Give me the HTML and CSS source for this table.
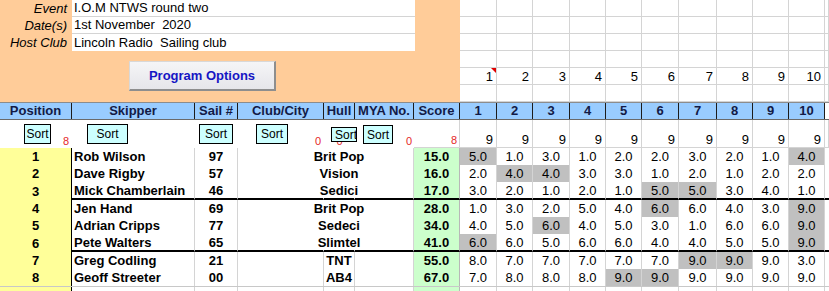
FILE: index.html
```html
<!DOCTYPE html>
<html>
<head>
<meta charset="utf-8">
<link rel="stylesheet" href="styles.css">
</head>
<body>
<div class="sheet">
  <div class="top">
    <div class="info">
      <div class="info-row"><span class="info-lbl">Event</span><span class="info-val">I.O.M NTWS round two</span></div>
      <div class="info-row"><span class="info-lbl">Date(s)</span><span class="info-val">1st November&nbsp; 2020</span></div>
      <div class="info-row"><span class="info-lbl">Host Club</span><span class="info-val last">Lincoln Radio&nbsp; Sailing club</span></div>
      <div class="btn-row"><button class="prog-btn">Program Options</button></div>
    </div>
    <div class="topgrid">
      <div class="tg"></div><div class="tg"></div><div class="tg"></div><div class="tg"></div><div class="tg"></div><div class="tg"></div><div class="tg"></div><div class="tg"></div><div class="tg"></div><div class="tg"></div><div class="tg"></div>
      <div class="tg"></div><div class="tg"></div><div class="tg"></div><div class="tg"></div><div class="tg"></div><div class="tg"></div><div class="tg"></div><div class="tg"></div><div class="tg"></div><div class="tg"></div><div class="tg"></div>
      <div class="tg"></div><div class="tg"></div><div class="tg"></div><div class="tg"></div><div class="tg"></div><div class="tg"></div><div class="tg"></div><div class="tg"></div><div class="tg"></div><div class="tg"></div><div class="tg"></div>
      <div class="tg"></div><div class="tg"></div><div class="tg"></div><div class="tg"></div><div class="tg"></div><div class="tg"></div><div class="tg"></div><div class="tg"></div><div class="tg"></div><div class="tg"></div><div class="tg"></div>
      <div class="tg num"><span class="comment"></span>1</div><div class="tg num">2</div><div class="tg num">3</div><div class="tg num">4</div><div class="tg num">5</div><div class="tg num">6</div><div class="tg num">7</div><div class="tg num">8</div><div class="tg num">9</div><div class="tg num">10</div><div class="tg"></div>
      <div class="tg"></div><div class="tg"></div><div class="tg"></div><div class="tg"></div><div class="tg"></div><div class="tg"></div><div class="tg"></div><div class="tg"></div><div class="tg"></div><div class="tg"></div><div class="tg"></div>
    </div>
  </div>

  <div class="row head">
    <div class="h">Position</div><div class="h">Skipper</div><div class="h">Sail #</div><div class="h">Club/City</div><div class="h">Hull</div><div class="h">MYA No.</div><div class="h">Score</div>
    <div class="h">1</div><div class="h">2</div><div class="h">3</div><div class="h">4</div><div class="h">5</div><div class="h">6</div><div class="h">7</div><div class="h">8</div><div class="h">9</div><div class="h">10</div><div class="h edge"></div>
  </div>

  <div class="row sortrow">
    <div class="s"><button class="sort sort-pos">Sort</button><span class="cnt">8</span></div>
    <div class="s"><button class="sort sort-skip">Sort</button></div>
    <div class="s"><button class="sort sort-sail">Sort</button></div>
    <div class="s"><button class="sort sort-club">Sort</button><span class="cnt">0</span></div>
    <div class="s s-center"><span class="cnt">0</span><button class="sort sort-hull">Sort</button></div>
    <div class="s"><button class="sort sort-mya">Sort</button><span class="cnt cnt-tight">0</span></div>
    <div class="s s-line"><span class="cnt cnt-tight">8</span></div>
    <div class="s s-line r">9</div><div class="s s-line r">9</div><div class="s s-line r">9</div><div class="s s-line r">9</div><div class="s s-line r">9</div><div class="s s-line r">9</div><div class="s s-line r">9</div><div class="s s-line r">9</div><div class="s s-line r">9</div><div class="s s-line r">9</div><div class="s s-line"></div>
  </div>

  <div class="row data ov">
    <div class="pos">1</div><div class="skip">Rob Wilson</div><div class="sail">97</div><div class="club"></div><div class="hull">Brit Pop</div><div class="mya"></div><div class="score">15.0</div>
    <div class="rc x">5.0</div><div class="rc">1.0</div><div class="rc">3.0</div><div class="rc">1.0</div><div class="rc">2.0</div><div class="rc">2.0</div><div class="rc">3.0</div><div class="rc">2.0</div><div class="rc">1.0</div><div class="rc x">4.0</div><div class="rc edge"></div>
  </div>
  <div class="row data ov">
    <div class="pos">2</div><div class="skip">Dave Rigby</div><div class="sail">57</div><div class="club"></div><div class="hull">Vision</div><div class="mya"></div><div class="score">16.0</div>
    <div class="rc">2.0</div><div class="rc x">4.0</div><div class="rc x">4.0</div><div class="rc">3.0</div><div class="rc">3.0</div><div class="rc">1.0</div><div class="rc">2.0</div><div class="rc">1.0</div><div class="rc">2.0</div><div class="rc">2.0</div><div class="rc edge"></div>
  </div>
  <div class="row data ov sep">
    <div class="pos">3</div><div class="skip">Mick Chamberlain</div><div class="sail">46</div><div class="club"></div><div class="hull">Sedici</div><div class="mya"></div><div class="score">17.0</div>
    <div class="rc">3.0</div><div class="rc">2.0</div><div class="rc">1.0</div><div class="rc">2.0</div><div class="rc">1.0</div><div class="rc x">5.0</div><div class="rc x">5.0</div><div class="rc">3.0</div><div class="rc">4.0</div><div class="rc">1.0</div><div class="rc edge"></div>
  </div>
  <div class="row data ov">
    <div class="pos">4</div><div class="skip">Jen Hand</div><div class="sail">69</div><div class="club"></div><div class="hull">Brit Pop</div><div class="mya"></div><div class="score">28.0</div>
    <div class="rc">1.0</div><div class="rc">3.0</div><div class="rc">2.0</div><div class="rc">5.0</div><div class="rc">4.0</div><div class="rc x">6.0</div><div class="rc">6.0</div><div class="rc">4.0</div><div class="rc">3.0</div><div class="rc x">9.0</div><div class="rc edge"></div>
  </div>
  <div class="row data ov">
    <div class="pos">5</div><div class="skip">Adrian Cripps</div><div class="sail">77</div><div class="club"></div><div class="hull">Sedeci</div><div class="mya"></div><div class="score">34.0</div>
    <div class="rc">4.0</div><div class="rc">5.0</div><div class="rc x">6.0</div><div class="rc">4.0</div><div class="rc">5.0</div><div class="rc">3.0</div><div class="rc">1.0</div><div class="rc">6.0</div><div class="rc">6.0</div><div class="rc x">9.0</div><div class="rc edge"></div>
  </div>
  <div class="row data ov sep">
    <div class="pos">6</div><div class="skip">Pete Walters</div><div class="sail">65</div><div class="club"></div><div class="hull">Slimtel</div><div class="mya"></div><div class="score">41.0</div>
    <div class="rc x">6.0</div><div class="rc">6.0</div><div class="rc">5.0</div><div class="rc">6.0</div><div class="rc">6.0</div><div class="rc">4.0</div><div class="rc">4.0</div><div class="rc">5.0</div><div class="rc">5.0</div><div class="rc x">9.0</div><div class="rc edge"></div>
  </div>
  <div class="row data">
    <div class="pos">7</div><div class="skip">Greg Codling</div><div class="sail">21</div><div class="club"></div><div class="hull">TNT</div><div class="mya"></div><div class="score">55.0</div>
    <div class="rc">8.0</div><div class="rc">7.0</div><div class="rc">7.0</div><div class="rc">7.0</div><div class="rc">7.0</div><div class="rc">7.0</div><div class="rc x">9.0</div><div class="rc x">9.0</div><div class="rc">9.0</div><div class="rc">3.0</div><div class="rc edge"></div>
  </div>
  <div class="row data">
    <div class="pos">8</div><div class="skip">Geoff Streeter</div><div class="sail">00</div><div class="club"></div><div class="hull">AB4</div><div class="mya"></div><div class="score">67.0</div>
    <div class="rc">7.0</div><div class="rc">8.0</div><div class="rc">8.0</div><div class="rc">8.0</div><div class="rc x">9.0</div><div class="rc x">9.0</div><div class="rc">9.0</div><div class="rc">9.0</div><div class="rc">9.0</div><div class="rc">9.0</div><div class="rc edge"></div>
  </div>
  <div class="row blank">
    <div class="pos"></div><div class="skip"></div><div class="sail"></div><div class="club"></div><div class="hull"></div><div class="mya"></div><div class="score"></div>
    <div class="rc"></div><div class="rc"></div><div class="rc"></div><div class="rc"></div><div class="rc"></div><div class="rc"></div><div class="rc"></div><div class="rc"></div><div class="rc"></div><div class="rc"></div><div class="rc edge"></div>
  </div>
</div>
</body>
</html>
```
FILE: styles.css
```css
* { box-sizing: border-box; }

body {
  margin: 0;
  background: #fff;
  color: #000;
  font-family: "Liberation Sans", Arial, sans-serif;
  font-size: 13px;
}

.sheet {
  width: 829px;
  height: 291px;
  overflow: hidden;
}

/* ---------- top area ---------- */
.top {
  display: flex;
  height: 102px;
}

.info {
  flex: none;
  width: 460px;
  background: #ffcc99;
}

.info-row {
  display: flex;
  height: 17px;
}

.info-lbl {
  width: 72px;
  padding-right: 5px;
  text-align: right;
  font-style: italic;
  line-height: 17px;
}

.info-val {
  width: 343px;
  padding-left: 2px;
  background: #fff;
  border-bottom: 1px solid #d4d4d4;
  line-height: 16px;
}

.info-val.last {
  border-bottom: 0;
  line-height: 17px;
}

.btn-row {
  padding: 10px 0 0 129px;
}

.prog-btn {
  display: block;
  width: 147px;
  height: 30px;
  padding: 0;
  font-family: "Liberation Sans", Arial, sans-serif;
  font-size: 13px;
  font-weight: bold;
  color: #1616c4;
  background: linear-gradient(#f5f5f7, #e6e6ea);
  border: 1px solid #d8d8d8;
  border-right: 2px solid #8e8e8e;
  border-bottom: 2px solid #8e8e8e;
}

.topgrid {
  flex: 1;
  display: grid;
  grid-template-columns: 37px 36px 37px 36px 36px 37px 38px 36px 36px 36px 1fr;
  grid-template-rows: repeat(6, 17px);
}

.tg {
  border-right: 1px solid #d4d4d4;
  border-bottom: 1px solid #d4d4d4;
}

.tg.num {
  position: relative;
  text-align: right;
  padding-right: 3px;
  line-height: 17px;
}

.comment {
  position: absolute;
  top: 0;
  right: 0;
  width: 0;
  height: 0;
  border-top: 5px solid #e00000;
  border-left: 5px solid transparent;
}

/* ---------- table rows ---------- */
.row {
  display: grid;
  grid-template-columns: 72px 123px 43px 86px 31px 59px 46px 37px 36px 37px 36px 36px 37px 38px 36px 36px 36px 1fr;
}

.head {
  height: 18px;
  background: #99ccff;
  border-top: 1px solid #8c8c8c;
  border-bottom: 1px solid #6a6a6a;
}

.h {
  border-right: 1px solid #1c1c1c;
  text-align: center;
  font-weight: bold;
  line-height: 16px;
  color: #121a46;
}

.h.edge {
  background: #fff;
  border-right: 0;
}

.sortrow {
  height: 28px;
}

.s {
  position: relative;
  display: flex;
  justify-content: flex-end;
  align-items: flex-end;
  line-height: 15px;
}

.s.s-line {
  border-right: 1px solid #d4d4d4;
  border-bottom: 1px solid #d4d4d4;
}

.s.r {
  padding-right: 3px;
}

.s.s-center {
  justify-content: center;
}

.cnt {
  color: #e52828;
  font-size: 11px;
  line-height: 13px;
  padding-right: 3px;
}

.cnt.cnt-tight {
  padding-right: 2px;
}

.s-center .cnt {
  padding-right: 0;
}

.sort {
  position: absolute;
  top: 4px;
  height: 20px;
  padding: 0;
  overflow: hidden;
  white-space: nowrap;
  background: #ccffff;
  border: 1px solid #000;
  color: #000;
  font-family: "Liberation Sans", Arial, sans-serif;
  font-size: 12px;
  line-height: 17px;
  text-align: center;
}

.sort-pos { left: 24px; width: 27px; }
.sort-skip { left: 15px; width: 41px; }
.sort-sail { left: 4px; width: 34px; }
.sort-club { left: 18px; width: 32px; }
.sort-hull {
  left: 7px;
  top: 7px;
  width: 26px;
  height: 15px;
  line-height: 12px;
  text-align: left;
  padding-left: 3px;
  z-index: 1;
}
.sort-mya { left: 8px; top: 5px; width: 30px; height: 19px; line-height: 16px; }

/* data rows */
.data {
  height: 17px;
}

.data > div,
.blank > div {
  display: flex;
  align-items: center;
  white-space: nowrap;
  line-height: 15px;
}

.pos {
  justify-content: center;
  background: #ffff99;
  border-right: 1px solid #000;
  font-weight: bold;
}

.skip {
  padding-left: 2px;
  font-weight: bold;
  border-right: 1px solid #d4d4d4;
}

.sail {
  justify-content: center;
  font-weight: bold;
  border-right: 1px solid #d4d4d4;
}

.club,
.hull,
.mya {
  border-right: 1px solid #d4d4d4;
}

.hull {
  justify-content: center;
  font-weight: bold;
}

.ov .club,
.ov .hull {
  border-right-color: transparent;
}

.score {
  justify-content: center;
  font-weight: bold;
  background: #ccffcc;
  border-right: 1px solid #b8b8b8;
}

.rc {
  justify-content: center;
  border-right: 1px solid #d4d4d4;
}

.rc.x {
  background: #c0c0c0;
}

.rc.edge {
  border-right: 0;
}

.sep {
  height: 18px;
}

.sep > div:not(.pos) {
  border-bottom: 2px solid #000;
}

.blank {
  height: 5px;
  border-top: 1px solid #c8c8c8;
}
```
